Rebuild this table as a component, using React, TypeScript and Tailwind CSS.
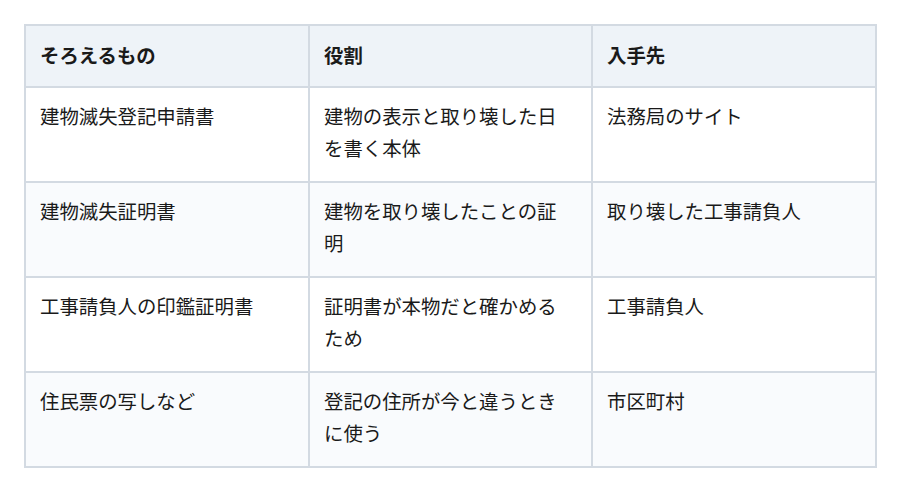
const rows = [
  ["建物滅失登記申請書", "建物の表示と取り壊した日を書く本体", "法務局のサイト"],
  ["建物滅失証明書", "建物を取り壊したことの証明", "取り壊した工事請負人"],
  ["工事請負人の印鑑証明書", "証明書が本物だと確かめるため", "工事請負人"],
  ["住民票の写しなど", "登記の住所が今と違うときに使う", "市区町村"],
]

export default function App() {
  return (
    <div className="w-[900px] h-[490px] bg-white pt-6 px-6 font-['Noto_Sans_CJK_JP','Noto_Sans',sans-serif] text-[#1a1a1a]">
      <table className="w-[851px] table-fixed border-collapse text-[19.4px] leading-[32px]">
        <thead>
          <tr className="bg-[#eef3f8]">
            <th className="w-[284px] border-2 border-[#d3dae2] pl-[14px] pr-4 pt-[13px] pb-[15px] text-left font-bold">そろえるもの</th>
            <th className="w-[283px] border-2 border-[#d3dae2] pl-[14px] pr-4 pt-[13px] pb-[15px] text-left font-bold">役割</th>
            <th className="w-[284px] border-2 border-[#d3dae2] pl-[14px] pr-4 pt-[13px] pb-[15px] text-left font-bold">入手先</th>
          </tr>
        </thead>
        <tbody>
          {rows.map((r, i) => (
            <tr key={i} className={i % 2 === 1 ? "bg-[#f9fbfd]" : "bg-white"}>
              {r.map((c, j) => (
                <td key={j} className="border-2 border-[#d3dae2] pl-[14px] pr-4 pt-3 pb-[17px] align-top">
                  {c}
                </td>
              ))}
            </tr>
          ))}
        </tbody>
      </table>
    </div>
  )
}
